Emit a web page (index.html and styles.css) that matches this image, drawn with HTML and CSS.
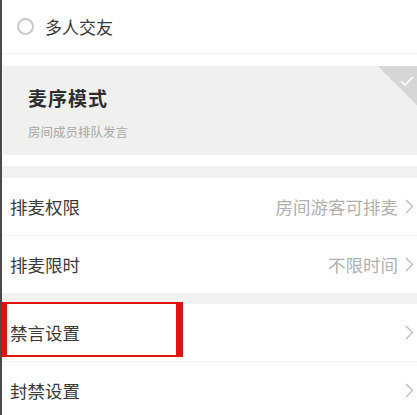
FILE: index.html
```html
<!DOCTYPE html>
<html lang="zh-CN">
<head>
  <meta charset="UTF-8" />
  <meta name="viewport" content="width=device-width, initial-scale=1.0" />
  <title>房间设置</title>
  <link rel="stylesheet" href="styles.css">
</head>
<body>
  <div class="option">
    <span class="radio"></span>
    <span class="option-label">多人交友</span>
  </div>

  <div class="mode-card">
    <div class="mode-title">麦序模式</div>
    <div class="mode-desc">房间成员排队发言</div>
    <div class="corner">
      <svg width="16" height="12" viewBox="0 0 16 12"><path d="M2 6 L6 10 L14 2" fill="none" stroke="#fff" stroke-width="1.6"/></svg>
    </div>
  </div>

  <div class="band"></div>
  <div class="row">
    <span class="label">排麦权限</span>
    <span class="value">房间游客可排麦<svg class="chev" width="9" height="15" viewBox="0 0 9 15"><path d="M1 1 L7.5 7.5 L1 14" fill="none" stroke="#bdbdbd" stroke-width="1.4"/></svg></span>
  </div>
  <div class="row">
    <span class="label">排麦限时</span>
    <span class="value">不限时间<svg class="chev" width="9" height="15" viewBox="0 0 9 15"><path d="M1 1 L7.5 7.5 L1 14" fill="none" stroke="#bdbdbd" stroke-width="1.4"/></svg></span>
  </div>

  <div class="band"></div>
  <div class="row">
    <span class="label">禁言设置</span>
    <span class="value"><svg class="chev" width="9" height="15" viewBox="0 0 9 15"><path d="M1 1 L7.5 7.5 L1 14" fill="none" stroke="#bdbdbd" stroke-width="1.4"/></svg></span>
    <div class="highlight"></div>
  </div>
  <div class="row">
    <span class="label">封禁设置</span>
    <span class="value"><svg class="chev" width="9" height="15" viewBox="0 0 9 15"><path d="M1 1 L7.5 7.5 L1 14" fill="none" stroke="#bdbdbd" stroke-width="1.4"/></svg></span>
  </div>
</body>
</html>
```

FILE: styles.css
```css
* {
  margin: 0;
  padding: 0;
  box-sizing: border-box;
}
body {
  height: 415px;
  overflow: hidden;
  background: #fff;
  border-left: 2px solid #4a4a4a;
  font-family: "Noto Sans CJK SC", "Noto Sans", sans-serif;
  color: #3a3a3a;
}
.option {
  height: 54px;
  display: flex;
  align-items: center;
  padding-left: 15px;
  gap: 11px;
  border-bottom: 1px solid #f3f3f3;
}
.radio {
  width: 17px;
  height: 17px;
  border: 2px solid #c8c8c8;
  border-radius: 50%;
}
.option-label {
  font-size: 17px;
}
.mode-card {
  position: relative;
  margin: 12px 0 0 1px;
  height: 89px;
  background: #f0f0ee;
  padding: 18px 0 0 25px;
  overflow: hidden;
}
.mode-title {
  font-size: 19px;
  font-weight: bold;
  color: #2e2e2e;
  letter-spacing: 1px;
}
.mode-desc {
  margin-top: 11px;
  font-size: 12.5px;
  color: #a8a8a8;
}
.corner {
  position: absolute;
  top: 0;
  right: 0;
  width: 39px;
  height: 39px;
  background: linear-gradient(45deg, transparent 50%, #d6d6d6 50%);
}
.corner svg {
  position: absolute;
  top: 9px;
  right: 2px;
}
.band {
  height: 12px;
  margin-top: 11px;
  background: #f2f2f1;
}
.row + .band {
  margin-top: 0;
  height: 10px;
}
.row {
  position: relative;
  height: 58px;
  display: flex;
  align-items: center;
  justify-content: space-between;
  padding-left: 8px;
  padding-right: 3px;
  border-bottom: 1px solid #f4f4f4;
}
.label {
  font-size: 17.5px;
}
.value {
  display: flex;
  align-items: center;
  gap: 7px;
  font-size: 17.5px;
  color: #b0b0b0;
}
.highlight {
  position: absolute;
  left: 0;
  top: -2px;
  width: 181px;
  height: 55px;
  border-style: solid;
  border-color: #e41010;
  border-width: 2px 7px 2px 5px;
}
```
